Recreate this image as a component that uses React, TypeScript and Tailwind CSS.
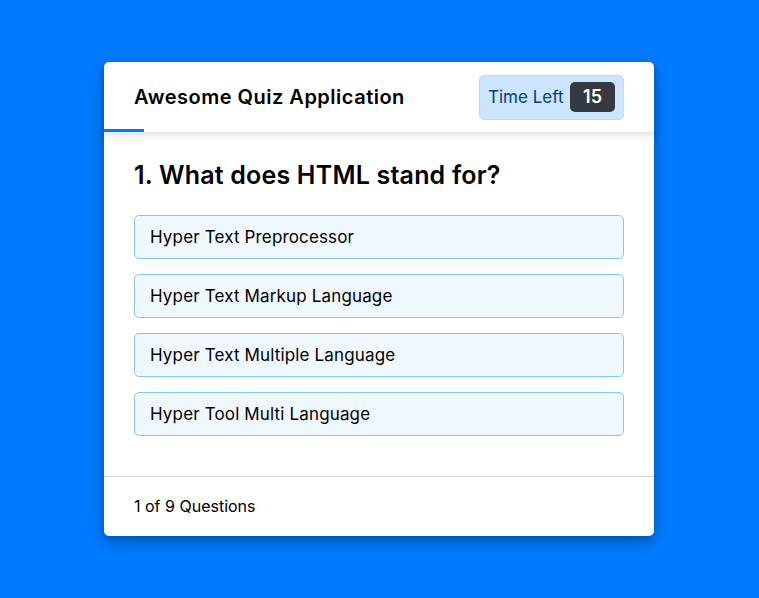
const options = [
  'Hyper Text Preprocessor',
  'Hyper Text Markup Language',
  'Hyper Text Multiple Language',
  'Hyper Tool Multi Language',
]

export default function App() {
  return (
    <div className="min-h-screen w-full bg-[#007bff] pl-[104px] pt-[62px] font-['Inter',sans-serif]">
      <div className="w-[550px] bg-white rounded-[5px] shadow-[0_4px_8px_0_rgba(0,0,0,0.2),0_6px_20px_0_rgba(0,0,0,0.19)]">
        {/* Header */}
        <header className="relative h-[70px] px-[30px] flex items-center justify-between rounded-t-[5px] shadow-[0_3px_5px_1px_rgba(0,0,0,0.1)]">
          <div className="text-[20px] font-semibold tracking-[0.5px] text-black">Awesome Quiz Application</div>
          <div className="w-[145px] h-[45px] px-2 flex items-center justify-between bg-[#cce5ff] border border-[#b8daff] rounded-[5px] text-[#004085]">
            <span className="text-[17px] pt-[1px]">Time Left</span>
            <span className="w-[45px] h-[30px] leading-[30px] text-center text-[18px] font-semibold text-white bg-[#343a40] rounded-[5px]">15</span>
          </div>
          <div className="absolute left-0 bottom-0 h-[3px] w-[40px] bg-[#007bff]" />
        </header>

        {/* Question */}
        <section className="px-[30px] pt-[25px] pb-[20px]">
          <div className="text-[25px] leading-[1.5] font-semibold tracking-[0.2px] text-black">1. What does HTML stand for?</div>
          <div className="py-5 flex flex-col gap-[15px]">
            {options.map((o) => (
              <div key={o} className="h-[44px] px-[15px] pt-[2px] flex items-center bg-[#f0f8ff] border border-[#84c5fe] rounded-[5px] text-[17px] tracking-[0.15px] text-black">
                {o}
              </div>
            ))}
          </div>
        </section>

        {/* Footer */}
        <footer className="h-[60px] px-[30px] flex items-center border-t border-[#d3d3d3] text-[16px] text-black">
          <span>1 of 9 Questions</span>
        </footer>
      </div>
    </div>
  )
}
